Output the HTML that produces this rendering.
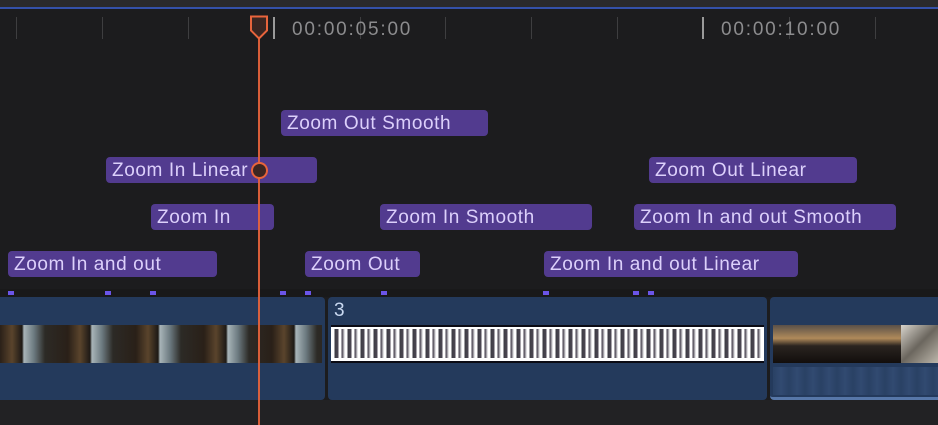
<!DOCTYPE html>
<html><head><meta charset="utf-8"><style>
*{margin:0;padding:0;box-sizing:border-box}
body{width:938px;height:425px;overflow:hidden;background:#1c1c1e;position:relative;font-family:"Liberation Sans",sans-serif}
.abs{position:absolute}
.tick{position:absolute;top:17px;width:1px;height:22px;background:#3e3e40}
.tc{position:absolute;top:19px;font-size:19px;color:#8c8c8e;letter-spacing:1.8px}
.lb{position:absolute;height:26px;background:#523b8f;border-radius:4px;color:#dcd0fb;font-size:19px;letter-spacing:0.6px;line-height:28px;padding-left:6px;white-space:nowrap}
.mk{position:absolute;top:291px;width:6px;height:4px;background:#6b55e8}
.clip{position:absolute;top:297px;height:103px;background:#243a5c;border-radius:4px}
</style></head><body>
<div class="abs" style="left:0;top:0;width:938px;height:7px;background:#2a2a2b"></div>
<div class="abs" style="left:0;top:7px;width:938px;height:2px;background:#3451a8"></div>
<div class="tick" style="left:16px"></div><div class="tick" style="left:102px"></div><div class="tick" style="left:188px"></div>
<div class="tick" style="left:273px;width:2px;background:#9a9a9a"></div>
<div class="tick" style="left:360px"></div><div class="tick" style="left:445px"></div><div class="tick" style="left:531px"></div><div class="tick" style="left:617px"></div>
<div class="tick" style="left:702px;width:2px;background:#9a9a9a"></div>
<div class="tick" style="left:789px"></div><div class="tick" style="left:875px"></div>
<div class="tc" style="left:292px">00:00:05:00</div>
<div class="tc" style="left:721px">00:00:10:00</div>

<div class="lb" style="left:281px;top:110px;width:207px">Zoom Out Smooth</div>
<div class="lb" style="left:106px;top:157px;width:211px">Zoom In Linear</div>
<div class="lb" style="left:649px;top:157px;width:208px">Zoom Out Linear</div>
<div class="lb" style="left:151px;top:204px;width:123px">Zoom In</div>
<div class="lb" style="left:380px;top:204px;width:212px">Zoom In Smooth</div>
<div class="lb" style="left:634px;top:204px;width:262px">Zoom In and out Smooth</div>
<div class="lb" style="left:8px;top:251px;width:209px">Zoom In and out</div>
<div class="lb" style="left:305px;top:251px;width:115px">Zoom Out</div>
<div class="lb" style="left:544px;top:251px;width:254px">Zoom In and out Linear</div>

<div class="abs" style="left:0;top:289px;width:938px;height:8px;background:#19191a"></div>
<div class="mk" style="left:8px"></div><div class="mk" style="left:105px"></div><div class="mk" style="left:150px"></div><div class="mk" style="left:280px"></div><div class="mk" style="left:305px"></div><div class="mk" style="left:381px"></div><div class="mk" style="left:543px"></div><div class="mk" style="left:633px"></div><div class="mk" style="left:648px"></div>

<div class="clip" style="left:-4px;width:329px"></div>
<div class="abs" style="left:0;top:325px;width:322px;height:38px;background:repeating-linear-gradient(90deg,#2a2018 0,#5a442c 12px,#1e1a16 22px,#a8b4b8 24px,#6c7a80 34px,#2c2a26 45px,#2a2018 68px)"></div>
<div class="clip" style="left:328px;width:439px"></div>
<div class="abs" style="left:334px;top:300px;color:#c9d8f0;font-size:19px">3</div>
<div class="abs" style="left:331px;top:325px;width:433px;height:38px;background:#fff;border-top:2px solid #0b0b14;border-bottom:2px solid #0b0b14"></div>
<div class="abs" style="left:332px;top:329px;width:431px;height:29px;background:repeating-linear-gradient(90deg,#fff 0,#fff 2px,#1c1a24 3px,#2c2634 6px,#fff 7px,#fff 9px,#262030 10px,#fff 13px);opacity:.85"></div>
<div class="clip" style="left:770px;width:172px;border-bottom:3px solid #5777a8"></div>
<div class="abs" style="left:773px;top:325px;width:128px;height:38px;background:linear-gradient(180deg,#5a5048 0,#b08a5a 35%,#2a2420 55%,#120e0c 100%)"></div>
<div class="abs" style="left:901px;top:325px;width:37px;height:38px;background:linear-gradient(135deg,#d8d4cc,#6b665e 50%,#bcb6aa)"></div>
<div class="abs" style="left:773px;top:367px;width:165px;height:28px;background:repeating-linear-gradient(90deg,#2c4468 0,#37517a 8px,#2c4468 16px);opacity:.7"></div>
<div class="abs" style="left:0;top:400px;width:938px;height:25px;background:#222224"></div>

<div class="abs" style="left:258px;top:38px;width:2px;height:387px;background:#e8643c;opacity:.92"></div>
<svg class="abs" style="left:249px;top:15px" width="20" height="26" viewBox="0 0 20 26"><path d="M2 1.5h16v14l-8 8-8-8z" fill="#3a2622" stroke="#e8643c" stroke-width="2"/></svg>
<div class="abs" style="left:251px;top:162px;width:17px;height:17px;border-radius:50%;background:#3c2622;border:2px solid #e8643c"></div>
</body></html>
